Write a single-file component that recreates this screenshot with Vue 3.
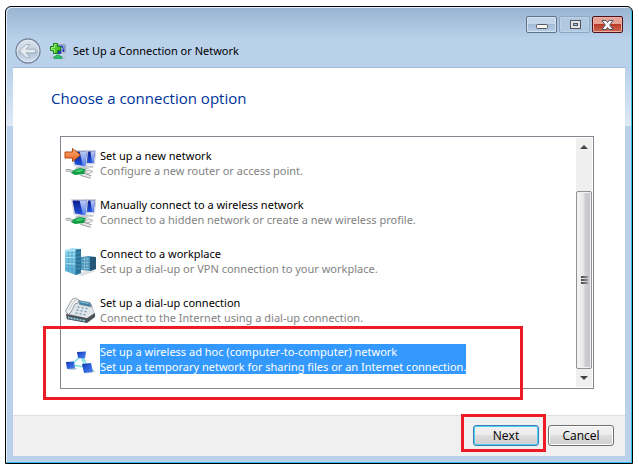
<template>
  <main class="window">
    <header class="titlebar">
      <div class="caption">
        <button class="cap min" aria-label="Minimize">
          <svg width="12" height="6" viewBox="0 0 12 6"><rect x=".5" y=".5" width="11" height="4" rx="1" fill="#f6f5f0" stroke="#535666" /></svg>
        </button>
        <button class="cap max" aria-label="Maximize" disabled>
          <svg width="12" height="10" viewBox="0 0 12 10">
            <rect x="1.500" y=".5" width="10" height="8" fill="#e4e4df" stroke="#535666" />
            <rect x="4.500" y="3.500" width="4" height="2" fill="#a4bdd9" stroke="#535666" />
          </svg>
        </button>
        <button class="cap close" aria-label="Close">
          <svg width="13" height="10" viewBox="0 0 13 10">
            <path d="M1 .5h4l1.500 2 1.500-2h4L8.700 5l3.300 4.500H8L6.500 7.500 5 9.500H1L4.300 5z" fill="#f8f8f8" stroke="#535666" />
          </svg>
        </button>
      </div>
      <div class="heading">
        <button class="back" aria-label="Back" disabled>
          <svg width="26" height="26" viewBox="0 0 26 26">
            <defs>
              <linearGradient id="back-fill" x1="0" y1="0" x2="0" y2="1">
                <stop offset="0" stop-color="#dce5ee" />
                <stop offset=".48" stop-color="#c3d1e0" />
                <stop offset=".52" stop-color="#adbfd3" />
                <stop offset="1" stop-color="#d5e3f2" />
              </linearGradient>
            </defs>
            <circle cx="13" cy="13" r="12" fill="url(#back-fill)" stroke="#74849a" stroke-width="1.300" />
            <circle cx="13" cy="13" r="10.800" fill="none" stroke="#e3ebf3" />
            <path d="M4.500 13l6.500-6.500h4L11 11.200h9.500v3.600H11l4 4.700h-4z" fill="#e6ebf0" stroke="#97a7ba" stroke-width=".8" />
          </svg>
        </button>
        <svg class="app-icon" width="16" height="16" viewBox="0 0 16 16">
          <path d="M7 1.500h8.500V10H7z" fill="#e2e5ea" stroke="#8b929c" stroke-width=".7" />
          <path d="M8 2.500h6.500V9H8z" fill="#1a2fa8" />
          <path d="M12 2.500h2.500V8z" fill="#7f9df0" />
          <path d="M5 5h7v6.500H5z" fill="#2940b5" stroke="#dde2e8" />
          <path d="M0 14.500h16" stroke="#b4bec6" stroke-width="1.500" />
          <path d="M6 12h4v1.500h2V16H4v-2.500h2z" fill="#2cc265" stroke="#168445" stroke-width=".5" />
          <path d="M3.500.500h4v3h3v4h-3v3h-4v-3h-3v-4h3z" fill="#4cc928" stroke="#17801a" />
          <path d="M4.500 9.500v-3h-3v-2h3v-3h2" fill="none" stroke="#a6ee80" />
        </svg>
        <span>Set Up a Connection or Network</span>
      </div>
    </header>

    <section class="page">
      <h1>Choose a connection option</h1>
      <div class="list-box">
        <svg class="defs" width="0" height="0">
          <defs>
            <linearGradient id="screen" x1="0" y1="0" x2="0" y2="1">
              <stop offset="0" stop-color="#0a1a8c" />
              <stop offset="1" stop-color="#2358e0" />
            </linearGradient>
            <linearGradient id="glare" x1="0" y1="0" x2="0" y2="1">
              <stop offset="0" stop-color="#b9c8f6" />
              <stop offset="1" stop-color="#4f80ee" />
            </linearGradient>
            <linearGradient id="arrow" x1="0" y1="0" x2="0" y2="1">
              <stop offset="0" stop-color="#ffb07a" />
              <stop offset="1" stop-color="#e8601a" />
            </linearGradient>
            <linearGradient id="rack" x1="0" y1="0" x2="0" y2="1">
              <stop offset="0" stop-color="#a5e2f5" />
              <stop offset="1" stop-color="#4fa9d2" />
            </linearGradient>
            <linearGradient id="node" x1="0" y1="0" x2="1" y2="1">
              <stop offset="0" stop-color="#0f2fae" />
              <stop offset=".5" stop-color="#2d62dc" />
              <stop offset="1" stop-color="#4f86ec" />
            </linearGradient>
          </defs>
        </svg>
        <ul class="options" role="listbox" aria-label="Connection options">
          <li v-for="item in options" :key="item.title" role="option" :aria-selected="item.selected" :class="{ selected: item.selected }">
            <svg class="icon" width="32" height="32" viewBox="0 0 32 32">
              <template v-if="item.icon === 'new' || item.icon === 'manual'">
                <path d="M22 3.500h10l-1.500 13.500-8.500 0z" fill="#d5d9e6" stroke="#b5b9c6" stroke-width=".5" />
                <path d="M22.500 4.500H31L29.500 16H22.500z" fill="url(#screen)" />
                <path d="M26.500 4.500H31L29.500 16H28z" fill="url(#glare)" />
                <path d="M22 18.500l8 .5-1.500 2-7-1z" fill="#c2c5c9" />
                <path d="M7.500 3.500H24l-2 17-12-2z" fill="#e3e5ee" stroke="#b5b9c6" stroke-width=".5" />
                <path d="M8.500 4.500H23L21.200 19.300l-10.200-1.800z" fill="url(#screen)" />
                <path d="M15.500 4.500H23L21.200 19.300l-2.200-.4z" fill="url(#glare)" />
                <path d="M12 20l6-.5 8 1.500-5 2-10-.5z" fill="#c0c4c8" />
                <path d="M2 24c3-2 5 .5 8 1" fill="none" stroke="#7d8286" stroke-width="2.500" />
                <path d="M2 24c3-2 5 .5 8 1" fill="none" stroke="#e0e4e6" stroke-width="1.200" />
                <path d="M17 27l10 3" stroke="#84898d" stroke-width="3.400" />
                <path d="M17 27l10 3" stroke="#e9ebec" stroke-width="2" />
                <path d="M7 26l3-3 6-2 6 1.500-2 4.500-9 1z" fill="#149c45" />
                <path d="M10 24.500l6-2.500 4 1.200-5 2z" fill="#3fce6d" />
                <path d="M20 25l5-2 4 1.500-5 2.500z" fill="#f0f1f2" stroke="#8d9391" stroke-width=".7" />
                <path v-if="item.icon === 'new'" d="M1 5h7.500V1.500L16.500 8l-8 6.500V11H1z" fill="url(#arrow)" stroke="#b04f14" />
              </template>
              <template v-else-if="item.icon === 'work'">
                <path d="M8 29l10 2 14-5-6-1z" fill="#dfe2e4" />
                <path d="M17 12l8-1 7 1v12l-6 2-9-1z" fill="#4b93b7" />
                <path d="M26 12l6 0v12l-6 2z" fill="#265777" />
                <path d="M18 14.500l7-.500M18 17.500h7M18 20.500h7M18 23.500h7M20.500 12v13M23 12v13" stroke="#8fc6dd" stroke-width=".7" />
                <path d="M1 5l8-2 8 1v24l-5 2-11-4z" fill="url(#rack)" />
                <path d="M11.500 4.500L17 4v24l-5.500 2z" fill="#2b7298" />
                <path d="M2 8l9-.500M2 11h9M2 14h9M2 17l9 .5M2 20l9 1M2 23l9 1.500M4.500 5v21M8 4.500V27" stroke="#4a9fc4" stroke-width=".6" />
                <path d="M2 6l9-1M2 12.500h9M2 18.500l9 .5" stroke="#c5f1fb" stroke-width=".7" />
                <path d="M12 8h4.500M12 12h4.500M12 16h4.500M12 20h4.500M12 24l4.500-.500" stroke="#5da0c2" stroke-width=".7" />
              </template>
              <template v-else-if="item.icon === 'dial'">
                <path d="M3 20l6-12 18 2 4 12-8 6-20-3z" fill="#b4babf" stroke="#6d757c" stroke-width=".7" />
                <path d="M2 20l21 4 8-5v4l-8 6-20-4z" fill="#4b535b" />
                <path d="M4 22.500l17 3.500v1.500L4 24.500z" fill="#8fcde0" />
                <path d="M6 22v3m3-2.500v3m3-2.500v3m3-2.500v3m3-2.500v3" stroke="#38474f" stroke-width=".8" />
                <path d="M10 7l17 2.500 3 9.500-7 5-17-4z" fill="#e3e6e9" />
                <path d="M15 6.500l11 2 1.500 4.500-12-2.500z" fill="#3f82a8" stroke="#7b868f" stroke-width=".6" />
                <path d="M16.500 8l8 1.500" stroke="#88c5dd" />
                <path d="M1.500 17L8 5.500 11 4l4 2-1 3-3 1-4 8-2.500 2.500z" fill="#f0f2f3" stroke="#7e878e" stroke-width=".8" />
                <path d="M5 16l5-9 3-1" fill="none" stroke="#c2c8cc" />
                <path d="M13.500 13l2 .4m2 .3l2 .4m2 .3l2 .4M12.500 16l2 .4m2 .3l2 .4m2 .3l2 .4M11.500 19l2 .4m2 .3l2 .4m2 .3l2 .4" stroke="#6f9ab8" stroke-width="1.300" />
              </template>
              <template v-else>
                <path d="M4 27l7 0 3-1.500-5-1zM21 31l11-2.500-4-2.500-3 3zM15 17l6 1 3-1z" fill="#d0d3d6" />
                <path d="M17 13L7 22l14 2z" fill="none" stroke="#6fe0dc" stroke-width="1.300" />
                <path d="M18 13l5 9" stroke="#6fe0dc" stroke-width="1.300" />
                <path d="M13 9l9-.500-1 7-7-.500z" fill="url(#node)" />
                <path d="M2 19l8-.500 1 7-8 .500z" fill="url(#node)" />
                <path d="M18 21l9-1 2 9-9 1z" fill="url(#node)" />
              </template>
            </svg>
            <div class="label">
              <div class="name">{{ item.title }}</div>
              <div class="desc">{{ item.desc }}</div>
            </div>
          </li>
        </ul>
        <div class="scrollbar">
          <button class="arrow" aria-label="Scroll up">
            <svg width="8" height="4" viewBox="0 0 8 4"><path d="M4 0l4 4H0z" fill="#444" /></svg>
          </button>
          <div class="track">
            <div class="thumb"><i></i><i></i><i></i></div>
          </div>
          <button class="arrow" aria-label="Scroll down">
            <svg width="8" height="4" viewBox="0 0 8 4"><path d="M0 0h8L4 4z" fill="#444" /></svg>
          </button>
        </div>
        <span class="mark mark-option"></span>
      </div>
    </section>

    <footer class="actions">
      <div class="next-wrap">
        <button class="btn primary">Next</button>
        <span class="mark mark-next"></span>
      </div>
      <button class="btn">Cancel</button>
    </footer>
  </main>
</template>

<script setup>
const options = [
  { icon: 'new', title: 'Set up a new network', desc: 'Configure a new router or access point.', selected: false },
  { icon: 'manual', title: 'Manually connect to a wireless network', desc: 'Connect to a hidden network or create a new wireless profile.', selected: false },
  { icon: 'work', title: 'Connect to a workplace', desc: 'Set up a dial-up or VPN connection to your workplace.', selected: false },
  { icon: 'dial', title: 'Set up a dial-up connection', desc: 'Connect to the Internet using a dial-up connection.', selected: false },
  { icon: 'adhoc', title: 'Set up a wireless ad hoc (computer-to-computer) network', desc: 'Set up a temporary network for sharing files or an Internet connection.', selected: true }
]
</script>

<style>
body { background: #fff; }
</style>

<style scoped>
* { box-sizing: border-box; }
button { font: inherit; color: inherit; padding: 0; margin: 0; }
svg { display: block; flex: none; }
.defs { position: absolute; }
.window {
  margin: 6px 6px 3px 5px;
  padding: 0 7px 7px;
  border: 1px solid #000;
  border-radius: 6px 6px 0 0;
  background: linear-gradient(#99b4d1, #b9d1ea 32px, #b9d1ea 62px, #dfe9f7 119px, #b9d1ea 119px);
  box-shadow: inset -1px -1px #2ec4e8, inset 1px 1px #e3eef9;
  font-family: "Noto Sans", "Open Sans", sans-serif;
  font-size: 11px;
  line-height: 15px;
  color: #000;
}
.titlebar { padding-top: 9px; border-bottom: 1px solid #a0b8d6; }
.caption { display: flex; justify-content: flex-end; gap: 2px; padding-right: 2px; }
.cap {
  width: 31px; height: 17px;
  display: flex; align-items: center; justify-content: center;
  border: 1px solid #60718c; border-radius: 2px;
  background: linear-gradient(#c3d5e8 45%, #a3bbd6 50%, #b9d0e8);
  box-shadow: inset 0 0 0 1px #d5e3f1;
}
.min { padding-top: 5px; }
.max { border-color: #8fa6c3; background: #b1c8e1; box-shadow: inset 0 0 0 1px #bfd3e8; }
.close {
  border-color: #4f121c;
  background: linear-gradient(#e6a195 45%, #b93a27 50%, #cf6a55);
  box-shadow: inset 0 0 0 1px #e9b0a4;
}
.heading { display: flex; align-items: center; height: 34px; padding: 1px 0 0 2px; }
.back { width: 26px; height: 26px; border: 0; border-radius: 50%; background: none; }
.app-icon { margin: 0 7px 0 9px; }
.page { background: #fff; padding: 19px 31px 26px 47px; }
h1 {
  margin: 0 0 27px -9px;
  font-family: "Open Sans", "Noto Sans", sans-serif;
  font-size: 15px; line-height: 22px; font-weight: 400; color: #003399;
}
.list-box { position: relative; display: flex; border: 1px solid #828790; padding: 1px; }
.options { flex: 1; list-style: none; margin: 0; padding: 0 0 4px 2px; }
li { display: flex; align-items: center; gap: 4px; height: 49px; }
.desc { color: #838383; }
.selected .label { background: #3399ff; }
.selected .desc, .selected .name { color: #fff; }
.scrollbar { width: 16px; display: flex; flex-direction: column; background: #efefef; }
.arrow { height: 18px; border: 0; background: none; display: flex; align-items: center; justify-content: center; }
.track { flex: 1; display: flex; padding-top: 35px; }
.thumb {
  flex: 1; display: flex; flex-direction: column; align-items: center; justify-content: center; gap: 1px;
  border: 1px solid #929292; border-radius: 2px;
  background: linear-gradient(90deg, #f5f5f5, #e6e6e8 45%, #cdcdd3 60%, #c4c4cb);
  box-shadow: inset 0 0 0 1px #f2f2f2;
}
.thumb i { width: 7px; height: 2px; background: linear-gradient(90deg, #444, #999); }
.mark { position: absolute; border: 3px solid #ed1c24; pointer-events: none; }
.mark-option { left: -18px; right: 70px; bottom: -12px; height: 74px; }
.mark-next { inset: -11px -7px -6px -12px; }
.actions {
  display: flex; justify-content: flex-end; gap: 9px;
  padding: 9px 11px 10px;
  border-top: 1px solid #dfdfdf; background: #f0f0f0;
}
.next-wrap { position: relative; display: flex; }
.btn {
  width: 66px; height: 21px;
  border: 1px solid #707070; border-radius: 3px;
  background: linear-gradient(#f2f2f2, #ebebeb 49%, #dddddd 50%, #cfcfcf);
  box-shadow: inset 0 0 0 1px #fbfbfb;
  font-family: "Open Sans", "Noto Sans", sans-serif;
  font-size: 12px;
}
.primary { border-color: #3c7fb1; box-shadow: inset 0 0 0 1px #48d0f5; }
</style>
